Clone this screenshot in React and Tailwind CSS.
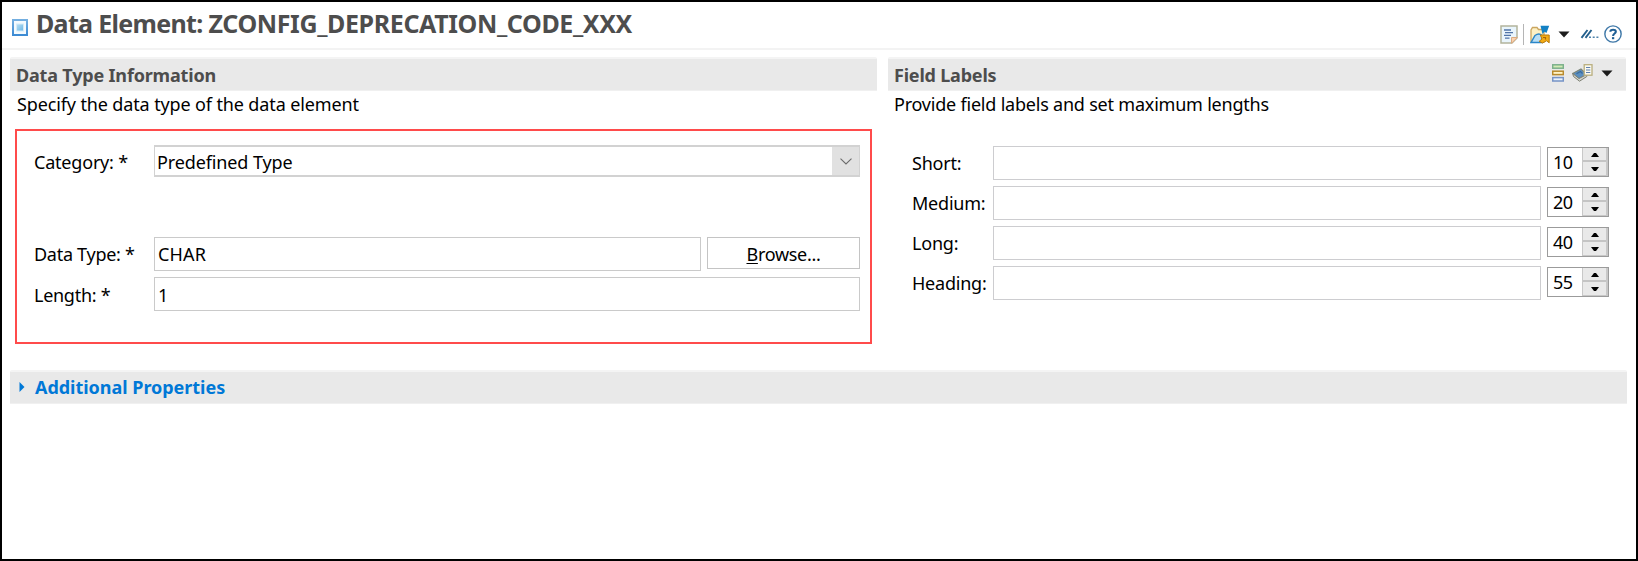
import React from "react";

const FONT = "font-['Noto_Sans','Open_Sans',sans-serif]";

function ElementIcon() {
  return (
    <svg width="16" height="17" viewBox="0 0 16 17">
      <defs>
        <linearGradient id="el" x1="0" y1="0" x2="0" y2="1">
          <stop offset="0" stopColor="#73aee0" />
          <stop offset="1" stopColor="#3d8bd4" />
        </linearGradient>
        <linearGradient id="core" x1="0" y1="0" x2="1" y2="1">
          <stop offset="0" stopColor="#b5dcf2" />
          <stop offset="1" stopColor="#6fb9e6" />
        </linearGradient>
      </defs>
      <rect x="1" y="1" width="14" height="15" fill="#f4fafe" stroke="url(#el)" strokeWidth="2" />
      <rect x="4" y="4.5" width="8" height="8" fill="#d3ebf8" />
      <rect x="5" y="5.5" width="6" height="6" fill="url(#core)" />
    </svg>
  );
}

function NoteIcon() {
  return (
    <svg width="18" height="19" viewBox="0 0 18 19">
      <path d="M1 1H17V13L12 18H1Z" fill="#e9f5fc" stroke="#b3b49c" strokeWidth="1.5" />
      <path d="M17.300 12.500H11.500V18.300Z" fill="#f9d3b0" stroke="#dcab80" strokeWidth="1" />
      <path d="M4 5H11M5 7.700H13M4 10.400H11M5 13.100H9.500" stroke="#5074a8" strokeWidth="1.300" />
    </svg>
  );
}

function FolderIcon() {
  return (
    <svg width="20" height="19" viewBox="0 0 20 19">
      <path d="M1 17V5L2.500 2.500H7L8.500 4.500H14V17Z" fill="#fdf0c4" stroke="#cba660" strokeWidth="1.300" />
      <path d="M10.500 0.800H19.200L16.500 8L14.500 6.800L12.500 9L11.500 5Z" fill="#1481c4" />
      <path d="M1 17.500L5 10.500Q9 7.500 12 10.500V17.500Z" fill="#b8def5" stroke="#2b86c8" strokeWidth="1.500" />
      <path d="M10.300 10H19.200V17.800L16.500 15.800L12.500 18L9.200 16.300L12 14Z" fill="#f3ac14" stroke="#b97a0c" strokeWidth="1" />
      <path d="M13 12.500H15.500V14.500" fill="none" stroke="#a86508" strokeWidth="1.200" />
    </svg>
  );
}

function Caret() {
  return (
    <svg width="12" height="7" viewBox="0 0 12 7">
      <path d="M0.500 0.500H11.500L6 6.500Z" fill="#1c1c1c" />
    </svg>
  );
}

function SlashIcon() {
  return (
    <svg width="19" height="10" viewBox="0 0 19 10">
      <path d="M1.500 8.800L7.500 1M5.500 8.800L11.500 1" stroke="#235f8c" strokeWidth="1.900" />
      <path d="M9 8.200H11M12.700 8.200H14.700M16.400 8.200H18.400" stroke="#4f83ab" strokeWidth="1.500" />
    </svg>
  );
}

function HelpIcon() {
  return (
    <svg width="18" height="18" viewBox="0 0 19 19">
      <circle cx="9.500" cy="9.500" r="8.600" fill="#fff" stroke="#3f78a8" strokeWidth="1.500" />
      <path
        d="M6.700 7.200C6.700 4.200 12.500 4.200 12.500 7.200C12.500 9 9.600 9.100 9.600 11.600"
        fill="none"
        stroke="#1f5f95"
        strokeWidth="2.200"
      />
      <rect x="8.400" y="12.800" width="2.400" height="2.200" fill="#1f5f95" />
    </svg>
  );
}

function BarsIcon() {
  return (
    <svg width="12" height="18" viewBox="0 0 12 18">
      <rect x="0.700" y="0.800" width="10.600" height="3.400" fill="#d3ecb4" stroke="#7bb08a" strokeWidth="1.500" />
      <rect x="0.700" y="7.200" width="10.600" height="3.400" fill="#fff3c6" stroke="#b98a2c" strokeWidth="1.500" />
      <rect x="0.700" y="13.600" width="10.600" height="3.400" fill="#eaf2fc" stroke="#7593c6" strokeWidth="1.500" />
    </svg>
  );
}

function BookIcon() {
  return (
    <svg width="21" height="18" viewBox="0 0 21 18">
      <path d="M0.700 9.500L9 5L14.800 10.500L7 15Z" fill="#5b8fc0" stroke="#7d8577" strokeWidth="1.100" />
      <path d="M0.700 9.500L7 14.500L14.800 10.500V12.500L7.500 17.200L1.500 12.500Z" fill="#d3d6cf" stroke="#7d7f72" strokeWidth="1" />
      <path d="M4.500 9.800L8.500 7.500L10.500 9.500" fill="none" stroke="#3a6b9e" strokeWidth="1.300" />
      <rect x="12.200" y="0.700" width="7.800" height="10.500" fill="#fbfaf0" stroke="#b9ae7e" strokeWidth="1.300" />
      <path d="M14 3.500H18.300M14 6H18.300M14 8.500H18.300" stroke="#5f80b0" strokeWidth="1.200" />
    </svg>
  );
}

function Bar({ className, children }) {
  return (
    <div className={`flex h-[34px] items-center rounded-t-[2px] border-t-2 border-b border-t-[#f4f4f4] border-b-[#f0f0f0] bg-[#e9e9e9] text-[18px] leading-6 font-bold ${className}`}>
      {children}
    </div>
  );
}

function Spinner({ value }) {
  return (
    <div className="flex h-[30px] w-[62px] border border-[#9b9b9b] bg-white">
      <span className="w-[34px] pt-px pl-[5px] text-[18px] leading-[27px] tracking-[-0.5px]">{value}</span>
      <div className="flex w-[26px] flex-col border-r-2 border-b border-l border-[#c8c8c8] bg-[#e9e9e9]">
        <div className="flex h-[14px] items-center justify-center border-b-2 border-[#c4c4c4] pt-0.5">
          <svg width="8" height="4" viewBox="0 0 8 4"><path d="M0 4L3 0H5L8 4Z" fill="#000" /></svg>
        </div>
        <div className="flex h-[13px] items-center justify-center">
          <svg width="8" height="4" viewBox="0 0 8 4"><path d="M0 0H8L5 4H3Z" fill="#000" /></svg>
        </div>
      </div>
    </div>
  );
}

const LABELS = [
  { label: "Short:", max: 10 },
  { label: "Medium:", max: 20 },
  { label: "Long:", max: 40 },
  { label: "Heading:", max: 55 },
];

export default function App() {
  return (
    <div className={`flex h-[561px] w-[1638px] flex-col overflow-hidden border-2 border-black bg-white whitespace-nowrap text-black ${FONT}`}>
      <header className="flex h-12 shrink-0 justify-between border-b-2 border-[#f3f3f3] pr-[14px] pl-[10px]">
        <div className="flex">
          <div className="pt-[17px]"><ElementIcon /></div>
          <h1 className="pt-[4px] pl-[8px] text-[25px] leading-[34px] font-bold tracking-[-0.38px] text-[#4d4d4d]">
            <span className="tracking-[-0.68px]">Data Element: </span>ZCONFIG_DEPRECATION_CODE_XXX
          </h1>
        </div>
        <div className="mb-[4px] flex h-5 items-center self-end">
          <NoteIcon />
          <div className="mr-[6px] ml-[5px] h-[21px] w-px bg-[#b5b5b5]" />
          <FolderIcon />
          <div className="ml-2"><Caret /></div>
          <div className="ml-[10px]"><SlashIcon /></div>
          <div className="ml-[5px]"><HelpIcon /></div>
        </div>
      </header>

      <main className="flex flex-col pt-[7px] pr-[9px] pl-2">
        <div className="flex h-[313px] gap-[11px]">
          <section className="w-[867px]">
            <Bar className="pl-[6px] tracking-[-0.18px] text-[#4d4d4d]">Data Type Information</Bar>
            <p className="pt-px pl-[7px] text-[18px] leading-6 tracking-[-0.13px]">Specify the data type of the data element</p>
            <div className="mt-[13px] ml-[5px] h-[215px] w-[857px] border-2 border-[#ff4b4b] pt-[14px] pl-[17px] text-[18px]">
              <div className="flex h-8">
                <label className="w-[120px] pt-[5px] leading-6 tracking-[-0.2px]">Category: *</label>
                <div className="flex h-8 w-[706px] border border-t-2 border-b-2 border-[#d2d2d2]">
                  <span className="flex-1 pt-[3px] pl-[2px] leading-6 tracking-[-0.12px]">Predefined Type</span>
                  <div className="flex w-[27px] items-center justify-center bg-[#e1e1e1]">
                    <svg width="12" height="7" viewBox="0 0 12 7"><path d="M0.500 0.700L6 6L11.500 0.700" fill="none" stroke="#6b6b6b" strokeWidth="1.100" /></svg>
                  </div>
                </div>
              </div>
              <div className="mt-[60px] flex h-[34px]">
                <label className="w-[120px] pt-[5px] leading-6 tracking-[-0.28px]">Data Type: *</label>
                <div className="h-[34px] w-[547px] border border-[#cacaca] pt-[4px] pl-[3px] leading-6 tracking-[0.2px]">CHAR</div>
                <button className="ml-[6px] h-8 w-[153px] border border-[#c4c4c4] bg-white pt-0.5 leading-6 tracking-[-0.3px]">
                  <span className="underline decoration-1 underline-offset-2">B</span>rowse...
                </button>
              </div>
              <div className="mt-[6px] flex h-[34px]">
                <label className="w-[120px] pt-[6px] leading-6 tracking-[-0.28px]">Length: *</label>
                <div className="h-[34px] w-[706px] border border-[#cacaca] pt-[5px] pl-[3px] leading-6">1</div>
              </div>
            </div>
          </section>

          <section className="w-[738px]">
            <Bar className="justify-between pr-[13px] pl-[6px] text-[#4d4d4d]">
              <span className="tracking-[-0.2px]">Field Labels</span>
              <div className="flex items-center pb-[3px]">
                <BarsIcon />
                <div className="ml-2"><BookIcon /></div>
                <div className="ml-2"><Caret /></div>
              </div>
            </Bar>
            <p className="pt-px pl-[6px] text-[18px] leading-6 tracking-[-0.21px]">Provide field labels and set maximum lengths</p>
            <div className="flex flex-col gap-[6px] pt-[30px] pl-[24px] text-[18px]">
              {LABELS.map((row) => (
                <div key={row.label} className="flex h-[34px]">
                  <label className="w-[81px] pt-[5px] leading-6 tracking-[-0.22px]">{row.label}</label>
                  <div className="h-[34px] w-[548px] border border-[#cdcdd0]" />
                  <div className="ml-[6px] pt-px"><Spinner value={row.max} /></div>
                </div>
              ))}
            </div>
          </section>
        </div>

        <Bar className="gap-[10px] pb-px pl-[9px] tracking-[-0.03px] text-[#0078d7]">
          <svg width="6" height="10" viewBox="0 0 6 10"><path d="M0.500 0L5.500 5L0.500 10Z" fill="#0078d7" /></svg>
          <span>Additional Properties</span>
        </Bar>
      </main>
    </div>
  );
}
